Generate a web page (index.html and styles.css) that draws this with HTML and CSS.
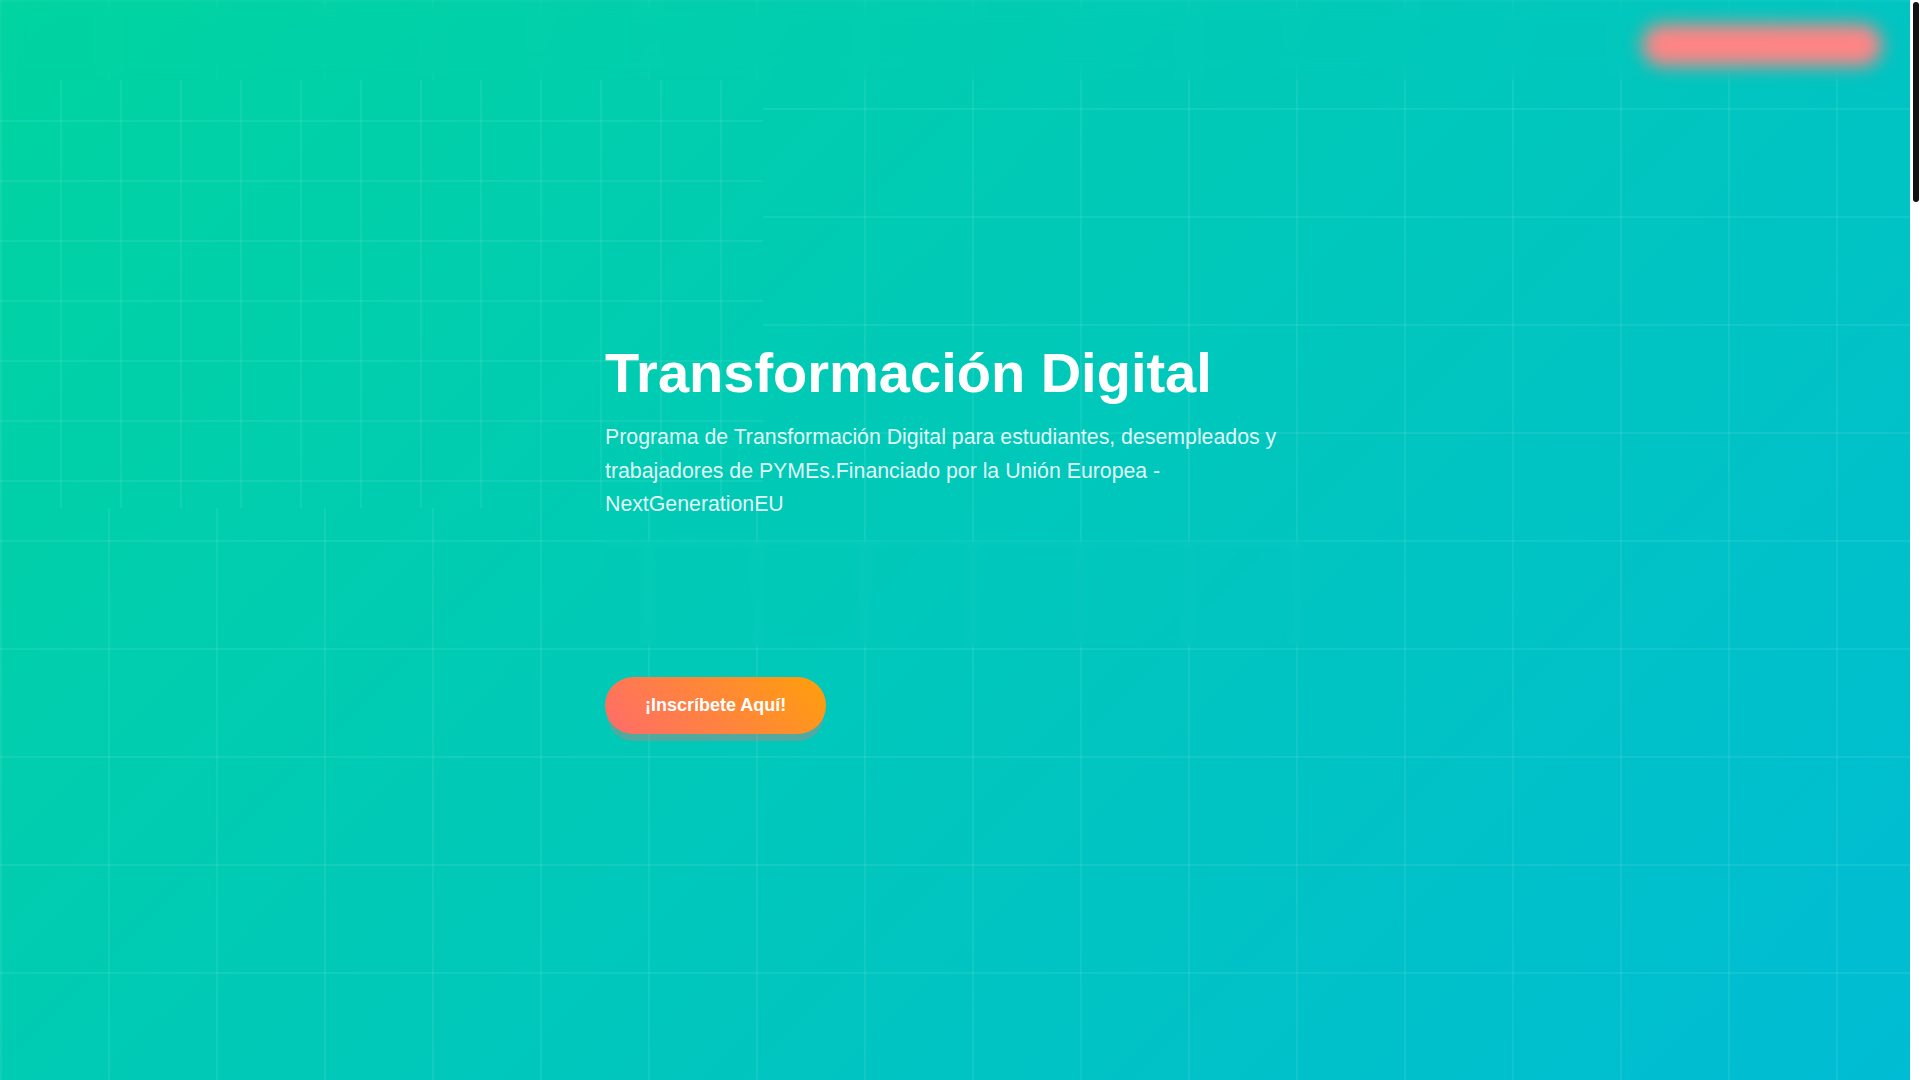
FILE: index.html
```html
<!DOCTYPE html>
<html lang="es">
<head>
<meta charset="utf-8">
<title>Transformación Digital</title>
<link rel="stylesheet" href="styles.css">
</head>
<body>
<header class="nav">
  <div class="nav-inner">
    <a class="nav-cta" href="#" aria-label="Inscríbete"></a>
  </div>
</header>
<main class="page">
  <section class="hero">
    <div class="grid-patch" aria-hidden="true"></div>
    <div class="hero-content">
      <h1 class="hero-title">Transformación Digital</h1>
      <p class="hero-text">Programa de Transformación Digital para estudiantes, desempleados y trabajadores de PYMEs.Financiado por la Unión Europea - NextGenerationEU</p>
      <div class="hero-stats" aria-hidden="true"></div>
      <a class="btn-cta" href="#">¡Inscríbete Aquí!</a>
    </div>
  </section>
</main>
<div class="scrollbar" aria-hidden="true"><div class="scrollbar-thumb"></div></div>
</body>
</html>
```

FILE: styles.css
```css
* { box-sizing: border-box; }

html, body {
  margin: 0;
  padding: 0;
}

body {
  font-family: "Liberation Sans", Arial, sans-serif;
  color: #fff;
  background: #fff;
  overflow: hidden;
}

.page {
  margin-right: 10px;
}

.scrollbar {
  position: fixed;
  top: 0;
  right: 0;
  width: 10px;
  height: 100vh;
  background: #fff;
  z-index: 20;
}

.scrollbar-thumb {
  position: absolute;
  top: 2px;
  left: 3px;
  width: 6px;
  height: 200px;
  border-radius: 3px;
  background: #111;
}

.nav {
  position: fixed;
  top: 0;
  left: 0;
  right: 10px;
  height: 80px;
  z-index: 10;
  backdrop-filter: blur(10px);
  -webkit-backdrop-filter: blur(10px);
}

.nav-inner {
  height: 100%;
  display: flex;
  align-items: center;
  justify-content: flex-end;
  padding: 10px 28px 0 0;
}

.nav-cta {
  display: block;
  width: 240px;
  height: 42px;
  border-radius: 21px;
  background: #ff8484;
  filter: blur(9px);
}

.hero {
  position: relative;
  min-height: 1080px;
  display: flex;
  align-items: center;
  justify-content: center;
  padding-bottom: 7px;
  overflow: hidden;
  background:
    linear-gradient(rgba(255,255,255,0.07) 2px, transparent 2px) 0 0 / 108px 108px,
    linear-gradient(90deg, rgba(255,255,255,0.07) 2px, transparent 2px) 0 0 / 108px 108px,
    linear-gradient(135deg, #00d4a0 0%, #00bcd4 100%);
}

.grid-patch {
  position: absolute;
  left: 0;
  top: 80px;
  width: 763px;
  height: 428px;
  background:
    linear-gradient(rgba(255,255,255,0.065) 2px, transparent 2px) 0 0 / 60px 60px fixed,
    linear-gradient(90deg, rgba(255,255,255,0.065) 2px, transparent 2px) 0 0 / 60px 60px fixed,
    linear-gradient(135deg, #00d4a0 0%, #00bcd4 100%) fixed;
}

.hero-content {
  position: relative;
  width: 700px;
  display: flex;
  flex-direction: column;
  align-items: flex-start;
}

.hero-title {
  margin: 0;
  font-size: 56px;
  line-height: 1.2;
  font-weight: 700;
  color: #fff;
}

.hero-text {
  margin: 15px 0 0;
  font-size: 21.3px;
  line-height: 33.6px;
  color: rgba(255,255,255,0.9);
}

.hero-stats {
  align-self: stretch;
  height: 107px;
  margin-top: 18px;
  backdrop-filter: blur(4px);
  -webkit-backdrop-filter: blur(4px);
}

.btn-cta {
  margin-top: 30px;
  display: inline-block;
  padding: 18px 40px;
  border-radius: 30px;
  font-size: 18px;
  line-height: 21px;
  font-weight: 700;
  color: #fff;
  text-decoration: none;
  background: linear-gradient(45deg, #ff6b6b 0%, #ffa00a 100%);
  box-shadow: 0 9px 0 -2px rgba(255,107,107,0.32);
}
```
